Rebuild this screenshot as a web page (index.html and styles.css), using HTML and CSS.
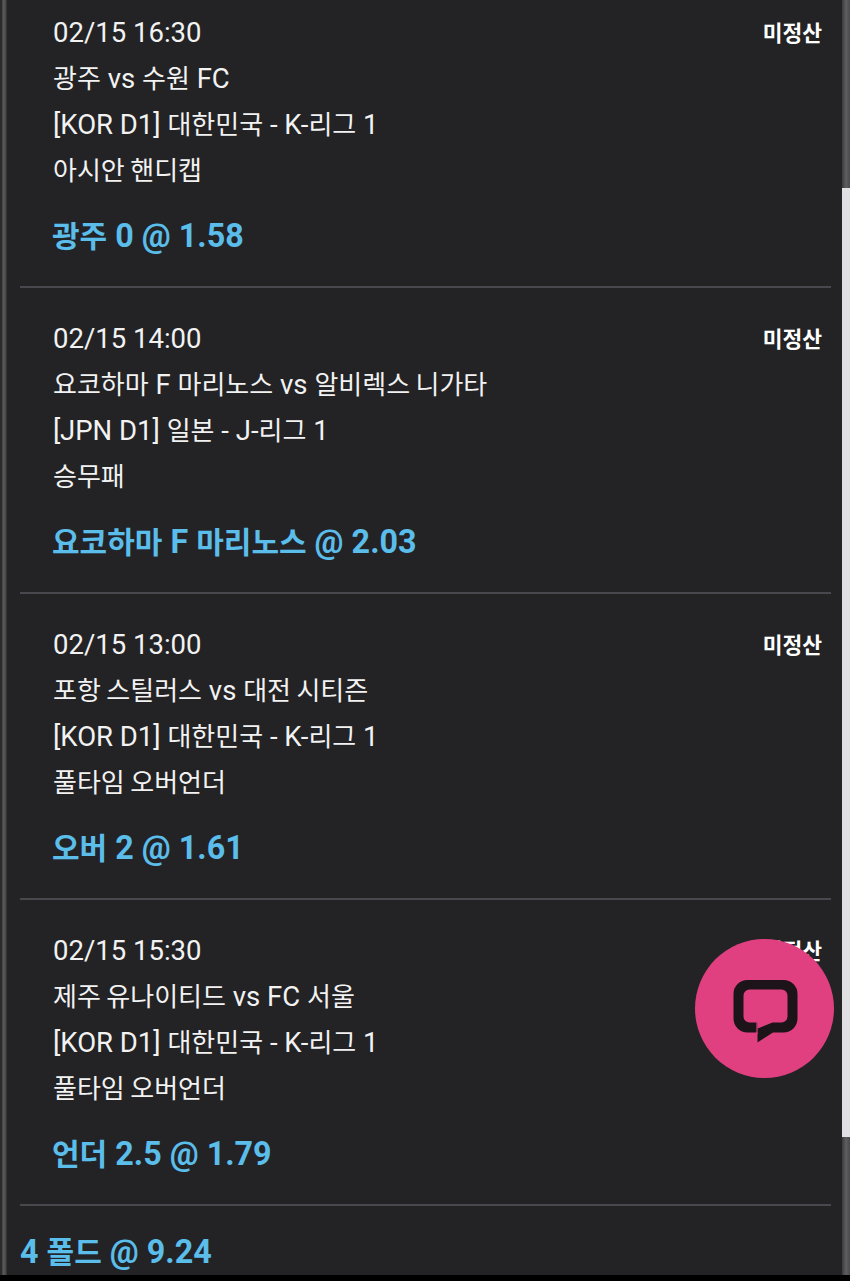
FILE: index.html
```html
<!DOCTYPE html>
<html lang="ko">
<head>
  <meta charset="UTF-8">
  <meta name="viewport" content="width=device-width, initial-scale=1.0">
  <title>Bet Slip</title>
  <link rel="stylesheet" href="styles.css">
</head>
<body>
  <div class="page">
    <div class="edge"></div>
    <div class="content">
      <div class="bet">
        <div class="bet-head">
          <span class="line">02/15 16:30</span>
          <span class="status">미정산</span>
        </div>
        <div class="line"><span class="ko">광주</span> vs <span class="ko">수원</span> FC</div>
        <div class="line">[KOR D1] <span class="ko">대한민국</span> - K-<span class="ko">리그</span> 1</div>
        <div class="line"><span class="ko">아시안 핸디캡</span></div>
        <div class="pick"><span class="ko">광주</span> 0 @ 1.58</div>
      </div>
      <div class="bet">
        <div class="bet-head">
          <span class="line">02/15 14:00</span>
          <span class="status">미정산</span>
        </div>
        <div class="line"><span class="ko">요코하마</span> F <span class="ko">마리노스</span> vs <span class="ko">알비렉스 니가타</span></div>
        <div class="line">[JPN D1] <span class="ko">일본</span> - J-<span class="ko">리그</span> 1</div>
        <div class="line"><span class="ko">승무패</span></div>
        <div class="pick"><span class="ko">요코하마</span> F <span class="ko">마리노스</span> @ 2.03</div>
      </div>
      <div class="bet">
        <div class="bet-head">
          <span class="line">02/15 13:00</span>
          <span class="status">미정산</span>
        </div>
        <div class="line"><span class="ko">포항 스틸러스</span> vs <span class="ko">대전 시티즌</span></div>
        <div class="line">[KOR D1] <span class="ko">대한민국</span> - K-<span class="ko">리그</span> 1</div>
        <div class="line"><span class="ko">풀타임 오버언더</span></div>
        <div class="pick"><span class="ko">오버</span> 2 @ 1.61</div>
      </div>
      <div class="bet">
        <div class="bet-head">
          <span class="line">02/15 15:30</span>
          <span class="status">미정산</span>
        </div>
        <div class="line"><span class="ko">제주 유나이티드</span> vs FC <span class="ko">서울</span></div>
        <div class="line">[KOR D1] <span class="ko">대한민국</span> - K-<span class="ko">리그</span> 1</div>
        <div class="line"><span class="ko">풀타임 오버언더</span></div>
        <div class="pick"><span class="ko">언더</span> 2.5 @ 1.79</div>
      </div>
      <div class="total">4 <span class="ko">폴드</span> @ 9.24</div>
    </div>
    <div class="rail">
      <div class="rail-top"></div>
      <div class="rail-thumb"></div>
      <div class="rail-bottom"></div>
    </div>
    <button class="chat" type="button" aria-label="chat">
      <svg width="66" height="70" viewBox="0 0 66 70">
        <path d="M15.5 6H51.5A14 14 0 0 1 65.5 20V44.5A14 14 0 0 1 51.5 58.5H41L25.5 68.5V58.5H15.5A14 14 0 0 1 1.5 44.5V20A14 14 0 0 1 15.5 6Z" fill="#1c1418"/>
        <path d="M17.5 15.5H49.5A6 6 0 0 1 55.5 21.5V42.5A6 6 0 0 1 49.5 48.5H40.5L25.5 54.5V48.5H17.5A6 6 0 0 1 11.5 42.5V21.5A6 6 0 0 1 17.5 15.5Z" fill="#e04080"/>
        <path d="M25 48V60" stroke="#e04080" stroke-width="1.2"/>
      </svg>
    </button>
  </div>
</body>
</html>
```

FILE: styles.css
```css
* {
  box-sizing: border-box;
}

html, body {
  margin: 0;
  padding: 0;
  height: 100%;
  overflow: hidden;
}

body {
  font-family: Roboto, "Noto Sans CJK KR", sans-serif;
  background-color: #000;
  color: #f2f2f2;
}

.page {
  position: relative;
  display: flex;
  height: 1275px;
  background-color: #232325;
}

.edge {
  width: 7px;
  background: linear-gradient(to right, #2a2a2a 0, #2e2e2e 25%, #5c5c5c 45%, #4a4a4a 80%, #2c2c2e 100%);
}

.content {
  flex: 1;
  padding: 0 11px 0 13px;
}

.bet {
  padding: 28px 9px 28px 33px;
  border-bottom: 2px solid #48484e;
}

.bet:first-child {
  padding-top: 10px;
}

.bet-head {
  display: flex;
  justify-content: space-between;
  align-items: center;
}

.ko {
  line-height: 1;
  word-spacing: -1px;
}

.line {
  font-size: 27.5px;
  line-height: 46px;
}

.line .ko {
  font-size: 26px;
}

.status {
  padding-bottom: 3px;
  font-size: 21.5px;
  font-weight: 700;
  color: #fff;
}

.pick {
  margin: 20px 0 0 -1px;
  font-size: 32.3px;
  line-height: 44px;
  font-weight: 700;
  color: #5bbdea;
}

.pick .ko, .total .ko {
  font-size: 30px;
}

.total {
  padding-top: 24px;
  font-size: 32.3px;
  line-height: 44px;
  font-weight: 700;
  color: #5bbdea;
}

.rail {
  display: flex;
  flex-direction: column;
  width: 8px;
}

.rail-top {
  height: 188px;
  background: linear-gradient(to right, #3a3a3c, #5e5e62 50%, #4a4a4e);
}

.rail-thumb {
  height: 949px;
  background-color: #e0e0e4;
}

.rail-bottom {
  flex: 1;
  background: linear-gradient(to right, #3a3a3c, #5e5e62 50%, #4a4a4e);
}

.chat {
  position: absolute;
  left: 695px;
  top: 939px;
  display: flex;
  justify-content: center;
  align-items: center;
  width: 139px;
  height: 139px;
  padding: 0;
  border: none;
  border-radius: 50%;
  background-color: #e04080;
}
```
